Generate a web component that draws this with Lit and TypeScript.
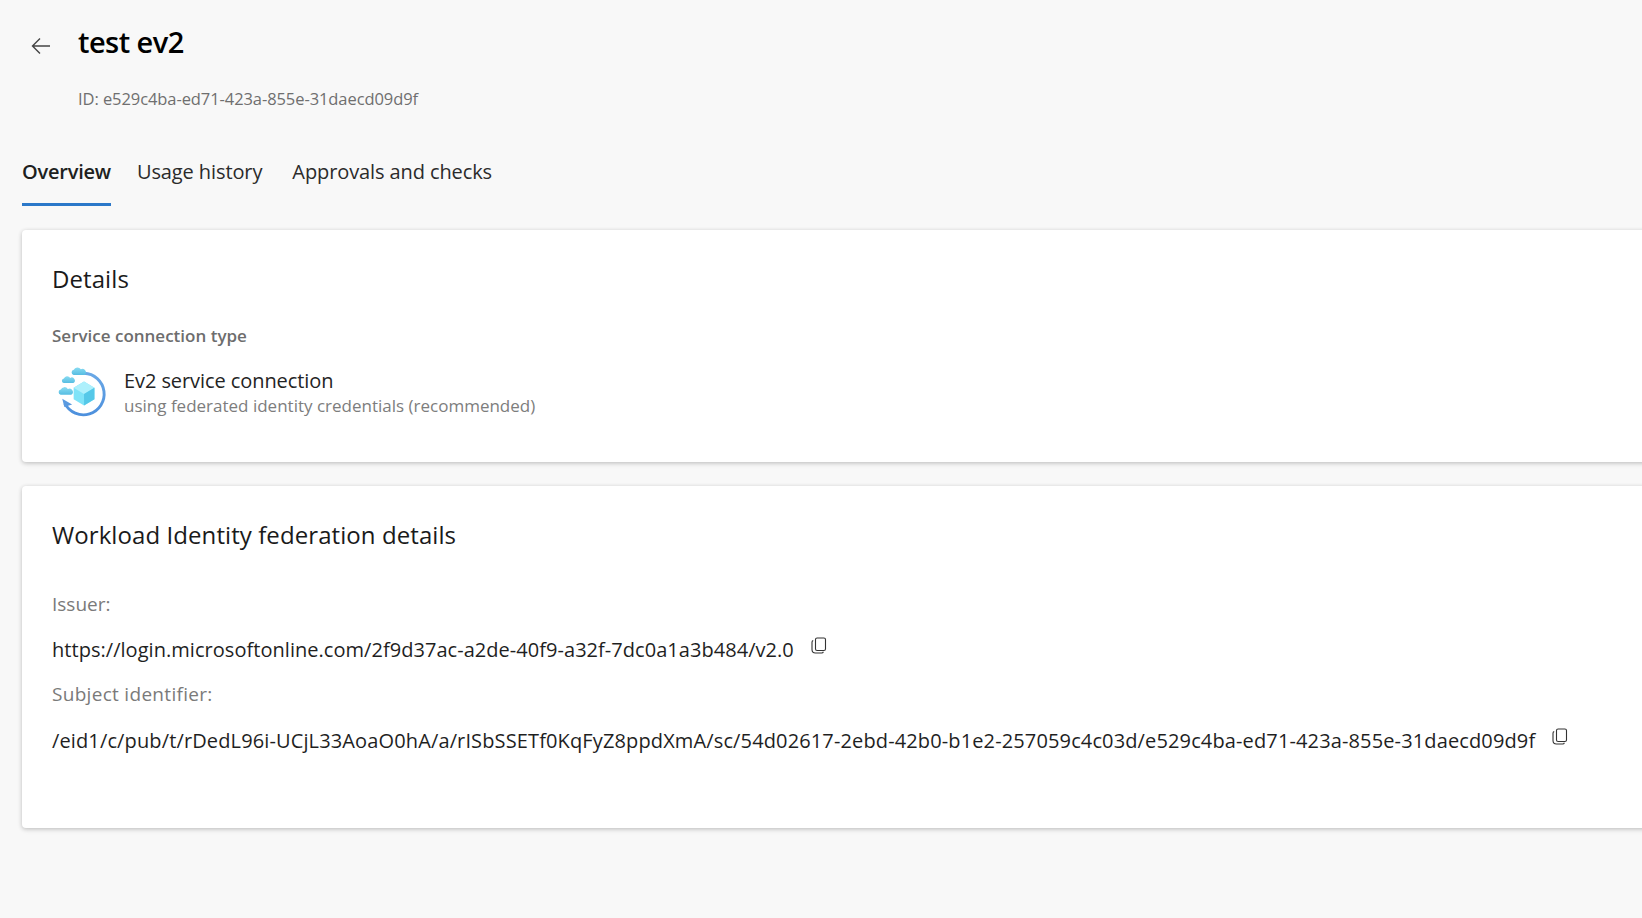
import { LitElement, html, css, svg } from "lit";
import { customElement } from "lit/decorators.js";

const copyIcon = svg`<svg class="copy" width="16" height="18" viewBox="0 0 16 18" fill="none" stroke="currentColor" stroke-width="1.1"><rect x="4.5" y="1" width="10" height="12.5" rx="1.6"/><path d="M2.2 3.6 A1.8 1.8 0 0 0 1 5.3 V12.6 A3.4 3.4 0 0 0 4.4 16 H10.6 A1.9 1.9 0 0 0 12.4 14.8"/></svg>`;

const cloud = (x: number, y: number, s: number) => svg`<g transform="translate(${x} ${y}) scale(${s})"><path d="M-4.6 2.4 A2.3 2.3 0 0 1 -4.4 -2.1 A3.4 3.4 0 0 1 1.7 -2.6 A2.6 2.6 0 0 1 4.7 2.4 Z" fill="url(#cl)"/></g>`;

@customElement("app-root")
export class AppRoot extends LitElement {
  static styles = css`
    :host {
      display: block;
      width: 1642px;
      height: 918px;
      overflow: hidden;
      background: #f8f8f8;
      font-family: "Open Sans", "Noto Sans", sans-serif;
      color: #201f1e;
    }
    .head { display: flex; align-items: center; height: 88px; padding-left: 31px; }
    .back { width: 20px; height: 20px; margin-right: 27px; margin-top: 4px; color: #444; flex: none; }
    h1 { margin: 0; font-size: 29px; line-height: 40px; font-weight: 600; color: #000; letter-spacing: -0.55px; margin-top: -4px; }
    .id { margin: 0 0 0 78px; font-size: 16.5px; line-height: 22px; color: #6f6f6f; letter-spacing: -0.08px; height: 38px; }
    .tabs { display: flex; padding-left: 22px; height: 80px; align-items: stretch; }
    .tab { display: flex; align-items: center; height: 80px; box-sizing: border-box; padding-top: 14px; font-size: 20px; color: #2b2b2b; letter-spacing: -0.1px; margin-right: 30px; border-bottom: 3px solid transparent; }
    .tab.on { font-weight: 600; color: #201f1e; border-bottom-color: #2b78c9; margin-right: 26px; letter-spacing: -0.22px; }
    .cards { display: flex; flex-direction: column; gap: 24px; margin-top: 24px; margin-left: 22px; margin-right: -8px; }
    .card { background: #fff; border-radius: 4px; box-shadow: 0 1px 4px rgba(0,0,0,.2), 0 2px 6px rgba(0,0,0,.06); box-sizing: border-box; padding-left: 30px; }
    .c1 { height: 232px; padding-top: 33px; }
    .c2 { height: 342px; padding-top: 33px; }
    h2 { margin: 0; font-size: 24px; line-height: 32px; font-weight: 400; color: #1a1a1a; letter-spacing: 0.08px; }
    .label { font-size: 17px; font-weight: 600; line-height: 22px; color: #6d6d6d; margin-top: 30px; }
    .type { display: flex; align-items: center; margin-top: 20px; margin-left: 4px; }
    .logo { width: 54px; height: 54px; margin-right: 14px; margin-top: -2px; flex: none; }
    .t1 { font-size: 20px; line-height: 23px; color: #242424; letter-spacing: -0.08px; }
    .t2 { font-size: 17px; line-height: 23px; color: #7d7d7d; margin-top: 2px; }
    .field { font-size: 19px; line-height: 26px; color: #7a7a7a; letter-spacing: 0; }
    .f1 { margin-top: 40px; }
    .field.wide { letter-spacing: 0.3px; }
    .value { display: flex; align-items: center; font-size: 20px; line-height: 26px; color: #1f1f1f; letter-spacing: 0.04px; margin-top: 20px; margin-bottom: 18px; white-space: nowrap; }
    .value.long { letter-spacing: 0.13px; margin-top: 21px; }
    .copy { margin-left: 17px; margin-top: -9px; color: #333; flex: none; }
  `;

  render() {
    return html`
      <div class="head">
        <svg class="back" viewBox="0 0 20 20" fill="none" stroke="currentColor" stroke-width="1.4"><path d="M19 10 H1.5 M9 2.5 L1.5 10 L9 17.5"/></svg>
        <h1>test ev2</h1>
      </div>
      <p class="id">ID: e529c4ba-ed71-423a-855e-31daecd09d9f</p>
      <div class="tabs">
        <div class="tab on">Overview</div>
        <div class="tab">Usage history</div>
        <div class="tab">Approvals and checks</div>
      </div>
      <div class="cards">
        <section class="card c1">
          <h2>Details</h2>
          <div class="label">Service connection type</div>
          <div class="type">
            <svg class="logo" viewBox="0 0 52 52" fill="none">
              <defs>
                <linearGradient id="cl" x1="0" y1="0" x2="0" y2="1"><stop offset="0" stop-color="#8adcf2"/><stop offset="1" stop-color="#56bde2"/></linearGradient>
                <linearGradient id="rg" x1="0" y1="0" x2="0" y2="1"><stop offset="0" stop-color="#6aa8e6"/><stop offset="1" stop-color="#4d90dd"/></linearGradient>
              </defs>
              <path d="M27 8 A20 20 0 1 1 8.5 37" stroke="url(#rg)" stroke-width="2.8" fill="none"/>
              <path d="M6 32.5 L8 40.5 L15.5 38" fill="#5a9ae0"/>
              ${cloud(22, 7, 1.1)}
              ${cloud(12, 15, 1)}
              ${cloud(9.5, 26, 1.1)}
              <path d="M27 16 L37 22 V33 L27 39 L17 33 V22 Z" fill="#7fe3f8"/>
              <path d="M27 16 L37 22 L27 28 L17 22 Z" fill="#aef0fc"/>
              <path d="M37 22 V33 L27 39 V28 Z" fill="#55c8e8"/>
            </svg>
            <div>
              <div class="t1">Ev2 service connection</div>
              <div class="t2">using federated identity credentials (recommended)</div>
            </div>
          </div>
        </section>
        <section class="card c2">
          <h2>Workload Identity federation details</h2>
          <div class="field f1">Issuer:</div>
          <div class="value">https://login.microsoftonline.com/2f9d37ac-a2de-40f9-a32f-7dc0a1a3b484/v2.0${copyIcon}</div>
          <div class="field wide">Subject identifier:</div>
          <div class="value long">/eid1/c/pub/t/rDedL96i-UCjL33AoaO0hA/a/rISbSSETf0KqFyZ8ppdXmA/sc/54d02617-2ebd-42b0-b1e2-257059c4c03d/e529c4ba-ed71-423a-855e-31daecd09d9f${copyIcon}</div>
        </section>
      </div>
    `;
  }
}
